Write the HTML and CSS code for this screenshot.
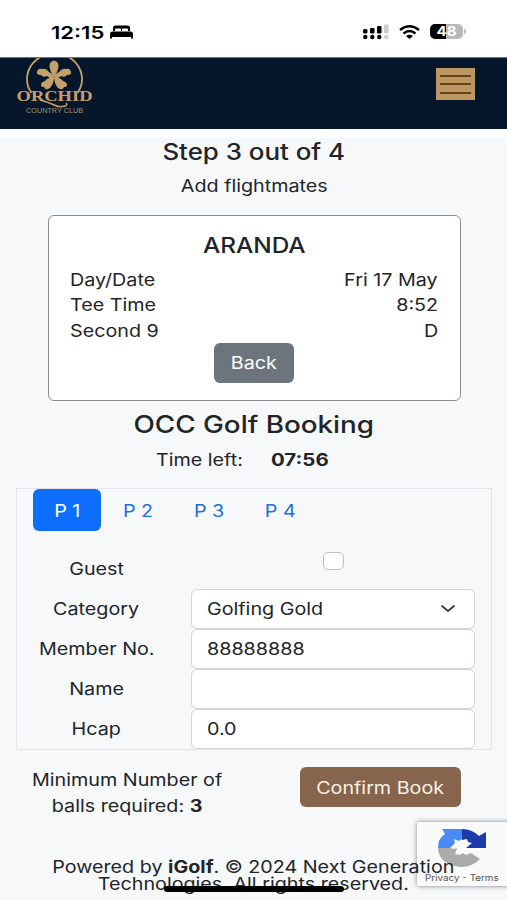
FILE: index.html
```html
<!DOCTYPE html>
<html lang="en">
  <head>
    <meta charset="UTF-8" />
    <meta name="viewport" content="width=device-width, initial-scale=1.0" />
    <title>OCC Golf Booking</title>
    <link rel="stylesheet" href="styles.css">
  </head>
  <body>
    <div class="status">
      <span class="clock">12:15</span>
      <svg class="bed" width="23" height="14" viewBox="0 0 23 14">
        <path d="M3 6V3q0-2.500 2.500-2.500h12q2.500 0 2.500 2.500v3h-2V4.500q0-1-1-1h-4q-1 0-1 1V6h-1V4.500q0-1-1-1H6q-1 0-1 1V6z" />
        <path d="M0 13.500V9q0-2.500 2.500-2.500h18Q23 6.500 23 9v4.500h-2V12H2v1.500z" />
      </svg>
      <svg class="signal" width="26" height="16" viewBox="0 0 26 16">
        <rect x="0" y="5" width="4.500" height="4.500" rx="1.500" />
        <rect x="7" y="4" width="4.500" height="5.500" rx="1.200" />
        <rect x="14" y="2" width="4.500" height="7.500" rx="1" />
        <rect x="21" y="0.500" width="4.500" height="9" rx="1" fill="#ccc" />
        <circle cx="2.300" cy="13" r="2.200" />
        <circle cx="9.300" cy="13" r="2.200" />
        <circle cx="16.300" cy="13" r="2.200" />
        <circle cx="23.300" cy="13" r="2.200" fill="#ccc" />
      </svg>
      <svg class="wifi" width="21" height="14" viewBox="0 0 21 14">
        <g fill="none" stroke="#000" stroke-width="2.400">
          <path d="M1 5q9.500-7.500 19 0" />
          <path d="M4.500 8.500q6-5 12 0" />
        </g>
        <path d="M7 11q3.500-2.500 7 0l-3.500 3z" />
      </svg>
      <span class="battery"><span class="wide">48</span></span>
      <i class="battery-cap"></i>
    </div>

    <header class="navbar">
      <svg class="logo" width="78" height="60" viewBox="0 0 78 60">
        <g fill="none" stroke="#c5a06d" stroke-width="1.800">
          <path d="M15.500 35A27.500 25.500 0 1 1 61.500 35" />
          <path d="M24 42q8 2 13 4.500 6 3.500 12 1.500 3-1 1-3" stroke-width="1.500" />
        </g>
        <g fill="#c5a06d">
          <path d="M38 20Q32 10 34 5q4-5 8 0 2 5-4 15z" />
          <path d="M38 20Q34 21 31 18q-4 2-6-1-5 0-4-3 1-4 5-3 4-1 7 3 4 2 5 6z" />
          <path d="M38 20q4 1 7-2 4 2 6-1 5 0 4-3-1-4-5-3-4-1-7 3-4 2-5 6z" />
          <path d="M38 20q-6-1-9 3-4 1-4 4 0 2 3 2 1 3 4 2 5-2 6-11z" />
          <path d="M38 20q6-1 9 3 4 1 4 4 0 2-3 2-1 3-4 2-5-2-6-11z" />
        </g>
        <text class="logo-name" x="0.500" y="43" textLength="76" lengthAdjust="spacingAndGlyphs">ORCHID</text>
        <text class="logo-sub" x="10" y="55" textLength="57" lengthAdjust="spacingAndGlyphs">COUNTRY CLUB</text>
      </svg>
      <button class="burger"><i></i><i></i><i></i></button>
    </header>

    <main>
      <h1><span class="wide">Step 3 out of 4</span></h1>
      <p class="sub"><span class="wide">Add flightmates</span></p>

      <section class="card">
        <h2><span class="wide">ARANDA</span></h2>
        <div class="row"><span class="wide left">Day/Date</span><span class="wide right">Fri 17 May</span></div>
        <div class="row"><span class="wide left">Tee Time</span><span class="wide right">8:52</span></div>
        <div class="row"><span class="wide left">Second 9</span><span class="wide right">D</span></div>
        <button class="back"><span class="wide">Back</span></button>
      </section>

      <h1 class="title"><span class="wide">OCC Golf Booking</span></h1>
      <p class="timer"><span class="wide left">Time left:</span><b class="wide left">07:56</b></p>

      <section class="panel">
        <nav class="tabs">
          <a class="tab active"><span class="wide">P 1</span></a>
          <a class="tab"><span class="wide">P 2</span></a>
          <a class="tab"><span class="wide">P 3</span></a>
          <a class="tab"><span class="wide">P 4</span></a>
        </nav>
        <div class="field guest">
          <label><span class="wide">Guest</span></label>
          <span class="check"></span>
        </div>
        <div class="field">
          <label><span class="wide">Category</span></label>
          <div class="input">
            <span class="wide left">Golfing Gold</span>
            <svg width="16" height="10" viewBox="0 0 16 10"><path d="M2 1l6 5 6-5" fill="none" stroke="#343a40" stroke-width="1.800" stroke-linecap="round" stroke-linejoin="round" /></svg>
          </div>
        </div>
        <div class="field">
          <label><span class="wide">Member No.</span></label>
          <div class="input"><span class="wide left">88888888</span></div>
        </div>
        <div class="field">
          <label><span class="wide">Name</span></label>
          <div class="input"></div>
        </div>
        <div class="field">
          <label><span class="wide">Hcap</span></label>
          <div class="input"><span class="wide left">0.0</span></div>
        </div>
      </section>

      <section class="actions">
        <p class="wide left">Minimum Number of<br>balls required: <b>3</b></p>
        <button class="confirm"><span class="wide">Confirm Book</span></button>
      </section>
    </main>

    <footer>
      <p class="wide">Powered by <b>iGolf</b>. © 2024 Next Generation<br>Technologies. All rights reserved.</p>
    </footer>

    <div class="captcha">
      <svg width="50" height="40" viewBox="0 0 50 40">
        <path d="M1 20Q1 10 8 6L5 1H25V11l-3 2-5-2 1 4-5 5z" fill="#4a8af4" />
        <path d="M25 1q10 0 17 7l7-4v16H29l6-5-4-1-1-3-5 1z" fill="#1c3aa9" />
        <path d="M1 20h12l4 1 3-1-2 6q5 2 8-1l3 2 5-2 9 6q-8 8-19 8Q2 37 1 20z" fill="#ababab" />
      </svg>
      <span class="wide">Privacy - Terms</span>
    </div>
    <div class="home-bar"></div>
  </body>
</html>
```

FILE: styles.css
```css
* {
  box-sizing: border-box;
}
body {
  margin: 0;
  position: relative;
  height: 900px;
  overflow: hidden;
  background-color: #f7f8fa;
  color: #212529;
  font-family: Inter, "Liberation Sans", sans-serif;
  font-size: 17px;
  line-height: 25.2px;
}
h1,
h2,
p {
  margin: 0;
}
button {
  border: none;
  padding: 0;
  font: inherit;
}
/* extended letterforms */
.wide {
  display: inline-block;
  transform: scaleX(1.16);
}
.left {
  transform-origin: left;
}
.right {
  transform-origin: right;
}
.status {
  height: 57px;
  padding: 6px 41px 0 51px;
  display: flex;
  align-items: center;
  background-color: white;
  color: black;
}
.clock {
  width: 48px;
  padding-top: 2px;
  font-size: 17.5px;
  font-weight: 600;
  transform: scaleX(1.26);
  transform-origin: left;
}
.bed {
  margin-left: 11px;
}
.signal {
  margin-left: auto;
}
.wifi {
  margin-left: 10px;
}
.battery {
  width: 33px;
  height: 15px;
  margin-left: 10px;
  border-radius: 5px;
  background: linear-gradient(to right, black 48%, #b9b9b9 48%);
  color: white;
  font-size: 13px;
  font-weight: 700;
  line-height: 15px;
  text-align: center;
}
.battery-cap {
  width: 2px;
  height: 5px;
  margin-left: 1px;
  border-radius: 0 2px 2px 0;
  background-color: #b9b9b9;
}
.navbar {
  height: 81px;
  padding: 0 32px 0 16px;
  border-top: 1px solid #68727d;
  border-bottom: 9px solid #fcfefe;
  display: flex;
  justify-content: space-between;
  align-items: flex-start;
  background-color: #07172b;
}
.logo-name {
  fill: #c5a06d;
  font-family: "Liberation Serif", serif;
  font-size: 15px;
  font-weight: 700;
}
.logo-sub {
  fill: #a49478;
  font-family: "Liberation Sans", sans-serif;
  font-size: 7.5px;
}
.burger {
  width: 39px;
  height: 32px;
  margin-top: 10px;
  display: flex;
  flex-direction: column;
  align-items: center;
  justify-content: center;
  gap: 6.5px;
  background-color: #bd9862;
}
.burger i {
  width: 31px;
  height: 2px;
  background-color: #66431c;
}
main {
  text-align: center;
}
h1 {
  font-size: 22.3px;
  font-weight: 500;
  line-height: 28px;
}
.sub {
  margin-top: 7px;
  padding: 1px 0 0 1px;
}
.card {
  width: 413px;
  height: 186px;
  margin: 16px auto 0 48px;
  padding: 16px 22px 0 21px;
  border: 1px solid #898b8d;
  border-radius: 6px;
  background-color: white;
}
h2 {
  font-size: 21px;
  font-weight: 500;
  line-height: 28px;
  margin-bottom: 8px;
}
.row {
  display: flex;
  justify-content: space-between;
}
.back {
  display: block;
  width: 80px;
  height: 40px;
  margin: -1px auto 0 144px;
  padding-top: 2px;
  border-radius: 6px;
  background-color: #6c757d;
  color: white;
}
.title {
  margin-top: 10px;
  font-size: 24px;
}
.timer {
  margin-top: 9px;
  display: flex;
  padding-left: 156px;
}
.timer span {
  width: 115px;
  text-align: left;
}
.timer b {
  transform: scaleX(1.2);
}
b {
  font-weight: 700;
}
.panel {
  width: 476px;
  height: 262px;
  margin: 15px 0 0 16px;
  border: 1px solid #e2e4e7;
}
.tabs {
  display: flex;
  gap: 3px;
  padding-left: 16px;
}
.tab {
  width: 68px;
  height: 42px;
  border-radius: 6px;
  line-height: 44px;
  color: #1d6fdc;
}
.active {
  background-color: #0d6efd;
  color: white;
}
.field {
  display: flex;
  align-items: center;
  height: 40.2px;
}
.field label {
  width: 159px;
  padding-top: 2px;
}
.guest {
  height: 57px;
  align-items: flex-start;
  padding-top: 21px;
}
.field.guest label {
  padding-top: 5px;
}
.check {
  width: 21px;
  height: 18px;
  margin: 0 auto;
  border: 1px solid #bfc1c4;
  border-radius: 5px;
  background-color: white;
}
.input {
  width: 284px;
  height: 40px;
  margin-left: 15px;
  padding: 2px 18px 0 15px;
  border: 1px solid #d3d5d8;
  border-radius: 6px;
  display: flex;
  align-items: center;
  justify-content: space-between;
  background-color: white;
}
.actions {
  display: flex;
  justify-content: space-between;
  padding: 17px 46px 0 32px;
}
.actions p {
  padding-top: 1px;
}
.confirm {
  width: 161px;
  height: 40px;
  padding-top: 2px;
  border-radius: 6px;
  background-color: #87654d;
  color: #fbf1e6;
}
footer {
  position: relative;
  z-index: 1;
  margin-top: 40px;
  line-height: 17px;
  text-align: center;
}
.captcha {
  position: absolute;
  top: 822px;
  left: 417px;
  width: 96px;
  height: 64px;
  padding-top: 6px;
  border-radius: 2px;
  box-shadow: 0 0 5px #808080;
  display: flex;
  flex-direction: column;
  align-items: flex-start;
  background-color: #fafafa;
}
.captcha svg {
  margin-left: 20px;
}
.captcha span {
  margin: 4px 0 0 8px;
  font-size: 8.5px;
  line-height: 12px;
  color: #555;
  transform-origin: left;
}
.home-bar {
  position: absolute;
  z-index: 2;
  top: 886px;
  left: 164px;
  width: 180px;
  height: 6px;
  border-radius: 3px;
  background-color: black;
}
```
